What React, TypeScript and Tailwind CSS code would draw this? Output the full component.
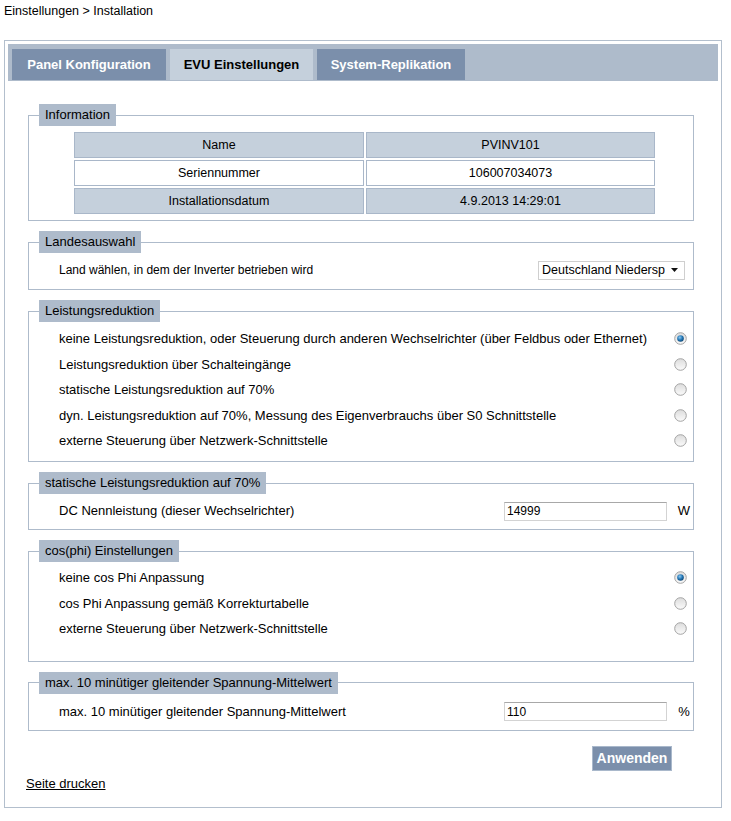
import React from 'react';

const font = "font-['Liberation_Sans',Arial,sans-serif]";

function Tab({ children, active, className = '' }: { children: React.ReactNode; active?: boolean; className?: string }) {
  return (
    <div
      className={
        (active
          ? 'h-[31px] flex items-center justify-center bg-[#c5d0dc] text-black font-bold text-[13px] '
          : 'h-[31px] flex items-center justify-center bg-[#7b8fab] text-white font-bold text-[13px] ') + className
      }
    >
      {children}
    </div>
  );
}

function Radio({ checked }: { checked?: boolean }) {
  return (
    <svg width="13" height="13" viewBox="0 0 13 13">
      <defs>
        <linearGradient id="rg" x1="0" y1="0" x2="0" y2="1">
          <stop offset="0" stopColor="#dcdcdc" />
          <stop offset="1" stopColor="#fbfbfb" />
        </linearGradient>
        <radialGradient id="rb" cx="0.4" cy="0.35" r="0.7">
          <stop offset="0" stopColor="#8cc8f0" />
          <stop offset="0.55" stopColor="#2276b5" />
          <stop offset="1" stopColor="#10436e" />
        </radialGradient>
      </defs>
      <circle cx="6.5" cy="6.5" r="5.8" fill="url(#rg)" stroke="#a3a3a3" strokeWidth="1" />
      {checked && <circle cx="6.5" cy="6.5" r="3.3" fill="url(#rb)" />}
    </svg>
  );
}

function Section({ title, className, children }: { title: string; className: string; children: React.ReactNode }) {
  return (
    <fieldset className={'border border-[#aebbcb] pl-[10px] ' + className}>
      <legend className="bg-[#aebbcb] px-[6px] h-[22px] leading-[22px] text-[13px]">{title}</legend>
      {children}
    </fieldset>
  );
}

function RadioRow({ label, checked }: { label: string; checked?: boolean }) {
  return (
    <div className="h-[25.5px] flex items-center justify-between pl-[20px] pr-[6px] text-[13px]">
      <span>{label}</span>
      <Radio checked={checked} />
    </div>
  );
}

function InputRow({ label, value, unit }: { label: string; value: string; unit: string }) {
  return (
    <div className="h-[26px] flex items-center pl-[20px] text-[13px]">
      <span>{label}</span>
      <input
        readOnly
        value={value}
        className="ml-auto w-[163px] h-[19px] border border-[#d3d3d3] border-t-[#a8a8a8] px-[2px] text-[12px] text-black outline-none"
      />
      <span className="w-[18px] ml-[8px] text-center">{unit}</span>
    </div>
  );
}

const info = [
  ['Name', 'PVINV101', true],
  ['Seriennummer', '106007034073', false],
  ['Installationsdatum', '4.9.2013 14:29:01', true],
] as const;

export default function App() {
  return (
    <div className={font + ' text-[12px] text-black bg-white min-h-screen'}>
      <div className="h-[40px] pl-[4px] pt-[2px] text-[12.5px]">Einstellungen &gt; Installation</div>

      <div className="ml-[4px] w-[718px] border border-[#b3bfcd] p-[3px] pb-[16px]">
        {/* Tabs */}
        <div className="flex gap-[4px] bg-[#aebbcb] pl-[4px] pt-[5px] pb-[1px]">
          <Tab className="w-[154px]">Panel Konfiguration</Tab>
          <Tab active className="w-[143px]">EVU Einstellungen</Tab>
          <Tab className="w-[148px]">System-Replikation</Tab>
        </div>

        <div className="ml-[20px] w-[666px] mt-[23px] flex flex-col gap-[10px]">
          <Section title="Information" className="pt-[6px] pb-[6px]">
            <div className="ml-[35px] grid grid-cols-[290px_289px] gap-[2px] text-[12.5px]">
              {info.map(([k, v, shaded]) => (
                <React.Fragment key={k}>
                  <div
                    className={
                      shaded
                        ? 'h-[26px] flex items-center justify-center border border-[#a9b7c9] bg-[#c5d0dc]'
                        : 'h-[26px] flex items-center justify-center border border-[#a9b7c9] bg-white'
                    }
                  >
                    {k}
                  </div>
                  <div
                    className={
                      shaded
                        ? 'h-[26px] flex items-center justify-center border border-[#a9b7c9] bg-[#c5d0dc]'
                        : 'h-[26px] flex items-center justify-center border border-[#a9b7c9] bg-white'
                    }
                  >
                    {v}
                  </div>
                </React.Fragment>
              ))}
            </div>
          </Section>

          <Section title="Landesauswahl" className="pt-[4px] pb-[6px]">
            <div className="h-[26px] flex items-center justify-between pl-[20px] pr-[8px]">
              <span>Land wählen, in dem der Inverter betrieben wird</span>
              <div className="w-[147px] h-[19px] border border-[#cfcfcf] flex items-center bg-white">
                <span className="flex-1 overflow-hidden whitespace-nowrap pl-[3px] text-[12.5px]">Deutschland Niedersp</span>
                <span className="w-[19px] h-full flex items-center justify-center bg-white">
                  <svg width="7" height="4" viewBox="0 0 7 4">
                    <path d="M0 0h7L3.5 4z" fill="#111" />
                  </svg>
                </span>
              </div>
            </div>
          </Section>

          <Section title="Leistungsreduktion" className="pt-[4px] pb-[7.5px]">
            <RadioRow checked label="keine Leistungsreduktion, oder Steuerung durch anderen Wechselrichter (über Feldbus oder Ethernet)" />
            <RadioRow label="Leistungsreduktion über Schalteingänge" />
            <RadioRow label="statische Leistungsreduktion auf 70%" />
            <RadioRow label="dyn. Leistungsreduktion auf 70%, Messung des Eigenverbrauchs über S0 Schnittstelle" />
            <RadioRow label="externe Steuerung über Netzwerk-Schnittstelle" />
          </Section>

          <Section title="statische Leistungsreduktion auf 70%" className="pt-[4px] pb-[5px]">
            <InputRow label="DC Nennleistung (dieser Wechselrichter)" value="14999" unit="W" />
          </Section>

          <Section title="cos(phi) Einstellungen" className="pt-[3px] pb-[19px]">
            <RadioRow checked label="keine cos Phi Anpassung" />
            <RadioRow label="cos Phi Anpassung gemäß Korrekturtabelle" />
            <RadioRow label="externe Steuerung über Netzwerk-Schnittstelle" />
          </Section>

          <Section title="max. 10 minütiger gleitender Spannung-Mittelwert" className="pt-[5px] pb-[5px]">
            <InputRow label="max. 10 minütiger gleitender Spannung-Mittelwert" value="110" unit="%" />
          </Section>
        </div>

        <div className="ml-[20px] w-[666px] mt-[15px] flex justify-end pr-[22px]">
          <button className="h-[25px] w-[80px] bg-[#7b8fab] border border-[#a9b8cb] text-white font-bold text-[14px]">
            Anwenden
          </button>
        </div>

        <div className="ml-[18px] mt-[6px] h-[14px] leading-[14px] text-[13px]">
          <a href="#" className="underline text-black">Seite drucken</a>
        </div>
      </div>
    </div>
  );
}
